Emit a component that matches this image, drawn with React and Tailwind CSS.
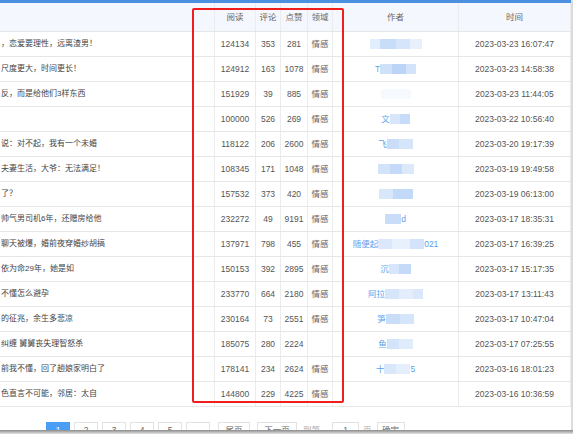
const ROWS = [
  { title: "，恋爱要理性，远离渣男！", read: 124134, cmt: 353, like: 281, tag: "情感", author: [["b", 10, "#e3eefc"], ["b", 16, "#c8ddf8"], ["b", 14, "#d6e6fa"], ["b", 12, "#e8f0fc"]], time: "2023-03-23 16:07:47" },
  { title: "尺度更大，时间更长！", read: 124912, cmt: 163, like: 1078, tag: "情感", author: [["t", "T"], ["b", 12, "#cfe1f9"], ["b", 14, "#bcd5f6"], ["b", 10, "#d3e4fa"]], time: "2023-03-23 14:58:38" },
  { title: "反，而是给他们3样东西", read: 151929, cmt: 39, like: 885, tag: "情感", author: [["b", 30, "#f6f9fe"]], time: "2023-03-23 11:44:05" },
  { title: "", read: 100000, cmt: 526, like: 269, tag: "情感", author: [["t", "文"], ["b", 10, "#d7e6fa"], ["b", 10, "#c6dcf8"]], time: "2023-03-22 10:56:40" },
  { title: "说：对不起，我有一个未婚", read: 118122, cmt: 206, like: 2600, tag: "情感", author: [["t", "飞"], ["b", 12, "#c9ddf8"], ["b", 14, "#d5e5fa"]], time: "2023-03-20 19:17:39" },
  { title: "夫妻生活，大爷：无法满足！", read: 108345, cmt: 171, like: 1048, tag: "情感", author: [["b", 12, "#d3e4fa"], ["b", 12, "#c4daf8"], ["b", 12, "#dce9fb"]], time: "2023-03-19 19:49:58" },
  { title: "了？", read: 157532, cmt: 373, like: 420, tag: "情感", author: [["b", 14, "#d9e7fb"], ["b", 20, "#c2d9f7"]], time: "2023-03-19 06:13:00" },
  { title: "帅气男司机6年，还赠房给他", read: 232272, cmt: 49, like: 9191, tag: "情感", author: [["b", 16, "#c9ddf8"], ["t", "d"]], time: "2023-03-17 18:35:31" },
  { title: "聊天被爆，婚前夜穿婚纱胡搞", read: 137971, cmt: 798, like: 455, tag: "情感", author: [["t", "随便起"], ["b", 14, "#dbe8fb"], ["b", 18, "#e7f0fc"], ["b", 14, "#d2e3fa"], ["t", "021"]], time: "2023-03-17 16:39:25" },
  { title: "依为命29年，她是如", read: 150153, cmt: 392, like: 2895, tag: "情感", author: [["t", "沉"], ["b", 10, "#d7e6fa"], ["b", 12, "#c4daf8"]], time: "2023-03-17 15:17:35" },
  { title: "不懂怎么避孕", read: 233770, cmt: 664, like: 2180, tag: "情感", author: [["t", "阿拉"], ["b", 14, "#d5e5fa"], ["b", 14, "#e3edfc"], ["b", 10, "#dbe8fb"]], time: "2023-03-17 13:11:43" },
  { title: "的征兆，余生多悲凉", read: 230164, cmt: 73, like: 2551, tag: "情感", author: [["t", "笋"], ["b", 14, "#c9ddf8"], ["b", 14, "#d6e6fa"]], time: "2023-03-17 10:47:04" },
  { title: "纠缠 舅舅丧失理智怒杀", read: 185075, cmt: 280, like: 2224, tag: "", author: [["t", "鱼"], ["b", 12, "#d3e4fa"], ["b", 14, "#e0ebfb"]], time: "2023-03-17 07:25:55" },
  { title: "前我不懂，回了趟娘家明白了", read: 178141, cmt: 234, like: 2624, tag: "情感", author: [["t", "十"], ["b", 12, "#d9e7fb"], ["b", 14, "#e4eefc"], ["t", "5"]], time: "2023-03-16 18:01:23" },
  { title: "色直言不可能，邻居：太自", read: 144800, cmt: 229, like: 4225, tag: "情感", author: [], time: "2023-03-16 10:36:59" },
];

const GRID = "grid grid-cols-[215px_41px_25px_27px_25px_126px_112px]";
const CELL = "flex items-center justify-center border-r border-[#ececec]";
const BTN = "flex h-[16px] items-center justify-center border border-[#e2e2e2] bg-white";

function Author({ parts }) {
  return (
    <div className="flex items-center">
      {parts.map((p, i) =>
        p[0] === "t" ? (
          <span key={i} className="text-[8.5px] text-[#5a9ff0]">{p[1]}</span>
        ) : (
          <span
            key={i}
            className="block h-[10px] blur-[0.6px]"
            style={{ width: p[1], background: p[2] }}
          />
        )
      )}
    </div>
  );
}

export default function App() {
  return (
    <div
      className="relative h-[434px] w-[573px] overflow-hidden bg-white text-[#555]"
      style={{ fontFamily: '"Liberation Sans", "Noto Sans CJK SC", sans-serif' }}
    >
      <div className="h-[3px] bg-[#4b8fdf]" />

      <div className={`${GRID} h-[29px] border-b border-[#e6e6e6] bg-[#f4f7fd] text-[8.5px] text-[#666]`}>
        <div className={CELL} />
        <div className={CELL}>阅读</div>
        <div className={CELL}>评论</div>
        <div className={CELL}>点赞</div>
        <div className={CELL}>领域</div>
        <div className={CELL}>作者</div>
        <div className={CELL}>时间</div>
      </div>

      {ROWS.map((r, i) => (
        <div key={i} className={`${GRID} h-[25px] border-b border-[#e6e6e6] text-[8.5px]`}>
          <div className="flex items-center overflow-hidden whitespace-nowrap border-r border-[#ececec] pl-[1px] text-[8px] text-[#444]">
            {r.title}
          </div>
          <div className={CELL}>{r.read}</div>
          <div className={CELL}>{r.cmt}</div>
          <div className={CELL}>{r.like}</div>
          <div className={`${CELL} text-[#666]`}>{r.tag}</div>
          <div className={CELL}>
            <Author parts={r.author} />
          </div>
          <div className={CELL}>{r.time}</div>
        </div>
      ))}

      <div className="flex items-start gap-1 pl-[46px] pt-[15px] text-[8.5px] text-[#666]">
        {["1", "2", "3", "4", "5", "…"].map((n) => (
          <div
            key={n}
            className={
              n === "1"
                ? "flex h-[16px] w-6 items-center justify-center border border-[#4a9ff5] bg-[#4a9ff5] text-white"
                : `${BTN} w-6`
            }
          >
            {n}
          </div>
        ))}
        <div className={`${BTN} ml-[4px] w-[32px]`}>尾页</div>
        <div className={`${BTN} ml-[3px] w-[40px]`}>下一页</div>
        <div className="ml-[2px] flex h-[16px] items-center text-[#aaa]">到第</div>
        <div className={`${BTN} ml-[8px] w-[27px]`}>1</div>
        <div className="flex h-[16px] items-center text-[#aaa]">页</div>
        <div className={`${BTN} ml-[1px] w-[28px]`}>确定</div>
      </div>

      <div className="absolute left-[192px] top-[8px] h-[395px] w-[152px] rounded-[2px] border-2 border-[#f01d1d]" />
      <div className="absolute right-0 top-0 h-full w-[2px] bg-[#dcdcdc]" />
      <div className="absolute bottom-0 left-0 h-[4px] w-full bg-gradient-to-b from-[#8c8c8c] to-[#e2e2e2]" />
    </div>
  );
}
